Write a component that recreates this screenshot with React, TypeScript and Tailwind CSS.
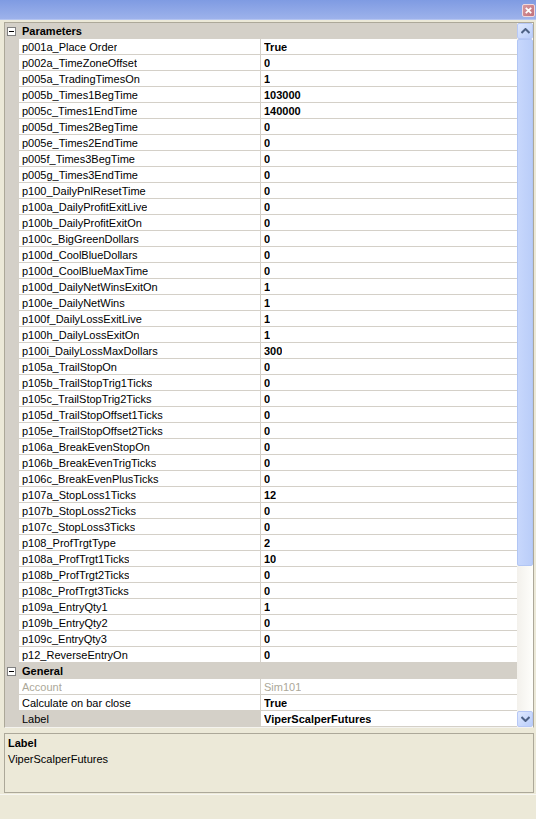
import React from "react";

type Row = { name: string; value: string; disabled?: boolean; selected?: boolean };

const parameters: Row[] = [
  { name: "p001a_Place Order", value: "True" },
  { name: "p002a_TimeZoneOffset", value: "0" },
  { name: "p005a_TradingTimesOn", value: "1" },
  { name: "p005b_Times1BegTime", value: "103000" },
  { name: "p005c_Times1EndTime", value: "140000" },
  { name: "p005d_Times2BegTime", value: "0" },
  { name: "p005e_Times2EndTime", value: "0" },
  { name: "p005f_Times3BegTime", value: "0" },
  { name: "p005g_Times3EndTime", value: "0" },
  { name: "p100_DailyPnlResetTime", value: "0" },
  { name: "p100a_DailyProfitExitLive", value: "0" },
  { name: "p100b_DailyProfitExitOn", value: "0" },
  { name: "p100c_BigGreenDollars", value: "0" },
  { name: "p100d_CoolBlueDollars", value: "0" },
  { name: "p100d_CoolBlueMaxTime", value: "0" },
  { name: "p100d_DailyNetWinsExitOn", value: "1" },
  { name: "p100e_DailyNetWins", value: "1" },
  { name: "p100f_DailyLossExitLive", value: "1" },
  { name: "p100h_DailyLossExitOn", value: "1" },
  { name: "p100i_DailyLossMaxDollars", value: "300" },
  { name: "p105a_TrailStopOn", value: "0" },
  { name: "p105b_TrailStopTrig1Ticks", value: "0" },
  { name: "p105c_TrailStopTrig2Ticks", value: "0" },
  { name: "p105d_TrailStopOffset1Ticks", value: "0" },
  { name: "p105e_TrailStopOffset2Ticks", value: "0" },
  { name: "p106a_BreakEvenStopOn", value: "0" },
  { name: "p106b_BreakEvenTrigTicks", value: "0" },
  { name: "p106c_BreakEvenPlusTicks", value: "0" },
  { name: "p107a_StopLoss1Ticks", value: "12" },
  { name: "p107b_StopLoss2Ticks", value: "0" },
  { name: "p107c_StopLoss3Ticks", value: "0" },
  { name: "p108_ProfTrgtType", value: "2" },
  { name: "p108a_ProfTrgt1Ticks", value: "10" },
  { name: "p108b_ProfTrgt2Ticks", value: "0" },
  { name: "p108c_ProfTrgt3Ticks", value: "0" },
  { name: "p109a_EntryQty1", value: "1" },
  { name: "p109b_EntryQty2", value: "0" },
  { name: "p109c_EntryQty3", value: "0" },
  { name: "p12_ReverseEntryOn", value: "0" },
];

const general: Row[] = [
  { name: "Account", value: "Sim101", disabled: true },
  { name: "Calculate on bar close", value: "True" },
  { name: "Label", value: "ViperScalperFutures", selected: true },
];

function Category({ title }: { title: string }) {
  return (
    <div className="flex h-[16px] items-center bg-[#d4d0c8]">
      <div className="flex w-[17px] shrink-0 justify-start pl-[2px]">
        <div className="flex h-[9px] w-[9px] items-center justify-center border border-[#808080] bg-white">
          <div className="h-[1px] w-[5px] bg-black" />
        </div>
      </div>
      <span className="pt-[1px] font-bold text-black">{title}</span>
    </div>
  );
}

function PropRow({ row }: { row: Row }) {
  return (
    <div className="flex h-[16px]">
      <div className="w-[14px] shrink-0 bg-[#d4d0c8]" />
      <div
        className={
          "flex w-[241px] shrink-0 items-center border-b border-[#d4d0c8] pl-[3px] pt-[1px] " +
          (row.selected ? "bg-[#d4d0c8] " : "bg-white ") +
          (row.disabled ? "text-[#aca899]" : "text-black")
        }
      >
        <span className="truncate">{row.name}</span>
      </div>
      <div className="w-[1px] shrink-0 bg-[#d4d0c8]" />
      <div
        className={
          "flex min-w-0 flex-1 items-center border-b border-[#d4d0c8] bg-white pl-[3px] pt-[1px] " +
          (row.disabled ? "text-[#aca899]" : "font-bold text-black")
        }
      >
        <span className="truncate">{row.value}</span>
      </div>
    </div>
  );
}

function Chevron({ up }: { up?: boolean }) {
  return (
    <svg width="9" height="6" viewBox="0 0 9 6" className={up ? "" : "rotate-180"}>
      <path d="M0.5 5 L4.5 1 L8.5 5" fill="none" stroke="#4d6185" strokeWidth="2" />
    </svg>
  );
}

function ScrollButton({ up }: { up?: boolean }) {
  return (
    <div className="flex h-[16px] w-[16px] shrink-0 items-center justify-center rounded-[2px] border border-[#b7c8f6] bg-gradient-to-br from-[#e0e9fe] to-[#b9cdfa]">
      <Chevron up={up} />
    </div>
  );
}

function ScrollBar() {
  return (
    <div className="flex w-[16px] shrink-0 flex-col bg-gradient-to-r from-[#f3f1ec] to-[#fefefb]">
      <ScrollButton up />
      <div className="flex flex-1 flex-col">
        <div className="h-[527px] rounded-[2px] border border-[#b2c6f4] bg-gradient-to-r from-[#c7d7fc] to-[#bacdf9]" />
      </div>
      <ScrollButton />
    </div>
  );
}

export default function App() {
  return (
    <div className="flex h-[819px] w-[536px] flex-col bg-[#ece9d8] font-['Tahoma','Liberation_Sans',sans-serif] text-[11px] leading-none">
      {/* caption */}
      <div className="flex h-[20px] shrink-0 items-start justify-end border-b border-[#b4c4f0] bg-gradient-to-b from-[#7f9be2] to-[#9db2eb] pr-[1px] pt-[4px]">
        <div className="flex h-[13px] w-[13px] items-center justify-center rounded-[2px] border border-[#f0d8dc] bg-gradient-to-br from-[#d89aa0] to-[#c0707a]">
          <svg width="7" height="7" viewBox="0 0 7 7">
            <path d="M0.8 0.8 L6.2 6.2 M6.2 0.8 L0.8 6.2" stroke="white" strokeWidth="1.8" />
          </svg>
        </div>
      </div>

      {/* property grid */}
      <div className="ml-[4px] mr-[2px] mt-[2px] flex h-[706px] shrink-0 border border-[#aca899] border-b-[#f4f3ee] bg-white">
        <div className="flex min-w-0 flex-1 flex-col">
          <Category title="Parameters" />
          {parameters.map((r) => (
            <PropRow key={r.name} row={r} />
          ))}
          <Category title="General" />
          {general.map((r) => (
            <PropRow key={r.name} row={r} />
          ))}
        </div>
        <ScrollBar />
      </div>

      {/* description pane */}
      <div className="ml-[4px] mr-[2px] mt-[5px] flex h-[60px] shrink-0 flex-col border border-[#aca899] px-[3px] pt-[4px]">
        <div className="font-bold text-black">Label</div>
        <div className="mt-[5px] text-black">ViperScalperFutures</div>
      </div>

      <div className="mt-[1px] h-[1px] bg-[#f7f6f1]" />
      <div className="flex-1" />
    </div>
  );
}
